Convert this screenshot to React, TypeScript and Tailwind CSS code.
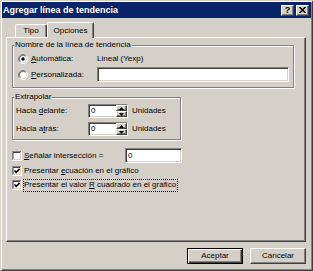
import React from "react";

const U = ({ children }: { children: React.ReactNode }) => (
  <span className="underline underline-offset-[1px] decoration-[1px]">{children}</span>
);

const raised =
  "bg-[#d4d0c8] border border-t-white border-l-white border-r-[#404040] border-b-[#404040] shadow-[inset_-1px_-1px_#808080]";
const sunken =
  "bg-white border border-t-[#808080] border-l-[#808080] border-r-white border-b-white shadow-[inset_1px_1px_#404040,inset_-1px_-1px_#d4d0c8]";

function Radio({ checked }: { checked?: boolean }) {
  return (
    <svg width="10" height="10" viewBox="0 0 12 12" className="shrink-0">
      <circle cx="6" cy="6" r="5.5" fill="#ffffff" />
      <path d="M9.9 2.1 A5.5 5.5 0 0 0 2.1 9.9" fill="none" stroke="#808080" strokeWidth="1" />
      <path d="M2.1 9.9 A5.5 5.5 0 0 0 9.9 2.1" fill="none" stroke="#ffffff" strokeWidth="1" />
      <path d="M9.2 2.8 A4.5 4.5 0 0 0 2.8 9.2" fill="none" stroke="#404040" strokeWidth="1" />
      <path d="M2.8 9.2 A4.5 4.5 0 0 0 9.2 2.8" fill="none" stroke="#d4d0c8" strokeWidth="1" />
      {checked && <circle cx="6" cy="6" r="2" fill="#000000" />}
    </svg>
  );
}

function Check({ checked }: { checked?: boolean }) {
  return (
    <svg width="10" height="10" viewBox="0 0 10 10" className="shrink-0">
      <rect x="0" y="0" width="10" height="10" fill="#ffffff" />
      <path d="M0 9.5 V0.5 H9.5" fill="none" stroke="#808080" strokeWidth="1" />
      <path d="M1 8.5 V1.5 H8.5" fill="none" stroke="#404040" strokeWidth="1" />
      <path d="M0.5 9.5 H9.5 V0" fill="none" stroke="#ffffff" strokeWidth="1" />
      <path d="M1.5 8.5 H8.5 V1" fill="none" stroke="#d4d0c8" strokeWidth="1" />
      {checked && (
        <path d="M2.5 4.5 L4.2 6.3 L7.6 2.9" fill="none" stroke="#000000" strokeWidth="1.6" />
      )}
    </svg>
  );
}

function Spin() {
  return (
    <div className={`w-[40px] h-[14px] flex ${sunken}`}>
      <div className="flex-1 pl-[2px] flex items-center">0</div>
      <div className="w-[11px] flex flex-col">
        <div className={`flex-1 flex items-center justify-center ${raised}`}>
          <svg width="5" height="3" viewBox="0 0 5 3">
            <path d="M2.5 0 L5 3 H0 Z" fill="#000" />
          </svg>
        </div>
        <div className={`flex-1 flex items-center justify-center ${raised}`}>
          <svg width="5" height="3" viewBox="0 0 5 3">
            <path d="M0 0 H5 L2.5 3 Z" fill="#000" />
          </svg>
        </div>
      </div>
    </div>
  );
}

export default function App() {
  return (
    <div className="w-[313px] h-[271px] bg-[#d4d0c8] p-[2px] flex flex-col text-[8px] leading-[10px] text-black font-['Liberation_Sans',Arial,sans-serif] shadow-[inset_1px_1px_#d4d0c8,inset_-1px_-1px_#404040,inset_2px_2px_#ffffff,inset_-2px_-2px_#808080]">
      {/* Title bar */}
      <div className="h-[16px] bg-[#0a246a] flex items-center pl-[1px] pr-[2px]">
        <span className="flex-1 text-white font-bold text-[9px]">Agregar línea de tendencia</span>
        <div className="flex gap-[2px]">
          <div className={`w-[13px] h-[11px] flex items-center justify-center font-bold text-[9px] leading-[9px] ${raised}`}>
            ?
          </div>
          <div className={`w-[13px] h-[11px] flex items-center justify-center ${raised}`}>
            <svg width="7" height="6" viewBox="0 0 7 6">
              <path d="M0.5 0 L6.5 6 M6.5 0 L0.5 6" stroke="#000" strokeWidth="1.5" />
            </svg>
          </div>
        </div>
      </div>

      {/* Tabs + panel */}
      <div className="ml-[4px] w-[300px] flex flex-col">
        <div className="h-[19px] flex items-end pl-[9px]">
          <div className="w-[32px] h-[13px] flex items-center justify-center border-t border-l border-r border-t-white border-l-white border-r-[#404040] rounded-tl-[2px] rounded-tr-[2px] shadow-[inset_-1px_0_#808080]">
            Tipo
          </div>
          <div className="w-[47px] h-[16px] -mb-[1px] relative z-10 bg-[#d4d0c8] flex items-center justify-center pt-[1px] border-t border-l border-r border-t-white border-l-white border-r-[#404040] rounded-tl-[2px] rounded-tr-[2px] shadow-[inset_-1px_0_#808080]">
            Opciones
          </div>
        </div>
        <div className="h-[205px] border border-t-white border-l-white border-r-[#404040] border-b-[#404040] shadow-[inset_-1px_-1px_#808080] flex flex-col pl-[5px]">
          {/* Group 1 */}
          <fieldset className="mt-[2px] w-[282px] border border-[#808080] shadow-[inset_1px_1px_#ffffff,1px_1px_#ffffff] pb-[5px]">
            <legend className="ml-[1px] px-[1px] bg-[#d4d0c8] leading-[10px]">
              Nombre de la línea de tendencia
            </legend>
            <div className="mt-[2px] h-[14px] flex items-center pl-[5px]">
              <Radio checked />
              <span className="ml-[3px] w-[66px]">
                <U>A</U>utomática:
              </span>
              <span>Lineal (Yexp)</span>
            </div>
            <div className="mt-[1px] h-[15px] flex items-center pl-[5px]">
              <Radio />
              <span className="ml-[3px] w-[66px]">
                <U>P</U>ersonalizada:
              </span>
              <div className={`w-[192px] h-[15px] ${sunken}`} />
            </div>
          </fieldset>

          {/* Group 2 */}
          <fieldset className="mt-[4px] w-[169px] border border-[#808080] shadow-[inset_1px_1px_#ffffff,1px_1px_#ffffff] pb-[3px]">
            <legend className="ml-[1px] px-[1px] bg-[#d4d0c8] leading-[10px]">Extrapolar</legend>
            <div className="mt-[2px] h-[14px] flex items-center pl-[3px]">
              <span className="w-[72px]">
                Hacia <U>d</U>elante:
              </span>
              <Spin />
              <span className="ml-[4px]">Unidades</span>
            </div>
            <div className="mt-[4px] h-[14px] flex items-center pl-[3px]">
              <span className="w-[72px]">
                Hacia a<U>t</U>rás:
              </span>
              <Spin />
              <span className="ml-[4px]">Unidades</span>
            </div>
          </fieldset>

          {/* Checkboxes */}
          <div className="mt-[8px] h-[15px] flex items-center">
            <Check />
            <span className="ml-[2px] w-[101px]">
              <U>S</U>eñalar intersección =
            </span>
            <div className={`w-[57px] h-[15px] flex items-center pl-[2px] ${sunken}`}>0</div>
          </div>
          <div className="h-[15px] flex items-center">
            <Check checked />
            <span className="ml-[2px]">
              Presentar <U>e</U>cuación en el gráfico
            </span>
          </div>
          <div className="h-[14px] flex items-center">
            <Check checked />
            <span className="ml-[1px] h-[13px] flex items-center border border-dotted border-black pr-[1px]">
              <span>
                Presentar el valor <U>R</U> cuadrado en el gráfico
              </span>
            </span>
          </div>
        </div>
      </div>

      {/* Buttons */}
      <div className="ml-[4px] w-[300px] mt-[6px] flex justify-end gap-[7px]">
        <div className="w-[56px] h-[16px] flex items-center justify-center bg-[#d4d0c8] border border-black shadow-[inset_1px_1px_#ffffff,inset_-1px_-1px_#404040,inset_-2px_-2px_#808080]">
          Aceptar
        </div>
        <div className={`w-[56px] h-[16px] flex items-center justify-center ${raised}`}>Cancelar</div>
      </div>
    </div>
  );
}
